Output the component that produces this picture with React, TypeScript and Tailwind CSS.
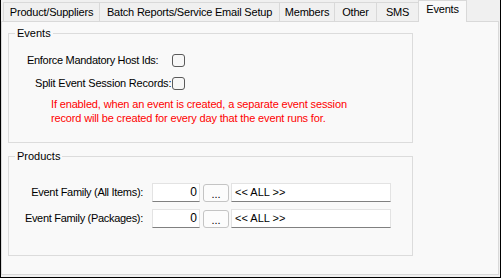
import React from 'react'

const tabs = [
    { name: 'Product/Suppliers', w: 'w-[97px]' },
    { name: 'Batch Reports/Service Email Setup', w: 'w-[181px]' },
    { name: 'Members', w: 'w-[56px]' },
    { name: 'Other', w: 'w-[43px]' },
    { name: 'SMS', w: 'w-[43px]' },
]

function Checkbox() {
    return <span className="block shrink-0 w-[13px] h-[13px] rounded-[3px] border border-[#5a5a5a] bg-[#f7f7f7]" />
}

function FamilyRow({ label }: { label: string }) {
    return (
        <div className="flex items-center h-[19px]">
            <div className="w-[135px] text-right pr-px whitespace-nowrap tracking-[-0.3px]">{label}</div>
            <div className="ml-[8px] w-[48px] h-[19px] bg-white border border-[#e3e3e3] border-b-[#808080] text-right pr-[2px] leading-[17px] text-[12px]">0</div>
            <div className="ml-[3px] w-[26px] h-[18px] rounded-[3px] border border-[#c4c4c4] bg-[#fcfcfc] text-center text-[11px] leading-[18px]">...</div>
            <div className="ml-[2px] w-[160px] h-[19px] bg-white border border-[#e3e3e3] border-b-[#808080] pl-[3px] leading-[17px]">&lt;&lt; ALL &gt;&gt;</div>
        </div>
    )
}

function GroupBox({ title, className, children }: { title: string; className: string; children: React.ReactNode }) {
    return (
        <div className={`relative border border-[#dcdcdc] ${className}`}>
            <span className="absolute -top-[8px] left-[6px] px-[2px] bg-[#f9f9f9] leading-[14px]">{title}</span>
            {children}
        </div>
    )
}

export default function App() {
    return (
        <div className="w-[501px] h-[278px] bg-[#f0f0f0] border-x border-b border-black flex flex-col text-[11px] text-black" style={{ fontFamily: '"Liberation Sans", Arial, sans-serif' }}>
            {/* Tab strip */}
            <div className="h-[21px] flex items-end pl-[2px] shrink-0 tracking-[-0.2px]">
                {tabs.map((t) => (
                    <div key={t.name} className={`${t.w} h-[19px] -ml-px first:ml-0 border border-b-0 border-[#d9d9d9] bg-[#f0f0f0] text-center leading-[18px] whitespace-nowrap`}>
                        {t.name}
                    </div>
                ))}
                <div className="w-[49px] h-[22px] -ml-px -mb-px relative z-10 border border-b-0 border-[#d9d9d9] bg-[#f9f9f9] text-center leading-[17px]">
                    Events
                </div>
            </div>

            {/* Panel */}
            <div className="flex-1 mr-px mb-[2px] bg-[#f9f9f9] border border-[#d9d9d9] pl-[6px] pt-[11px]">
                <GroupBox title="Events" className="w-[405px] h-[110px]">
                    <div className="pt-[19px] pl-[18px]">
                        <div className="flex items-center h-[14px]">
                            <div className="w-[145px] whitespace-nowrap tracking-[-0.3px]">Enforce Mandatory Host Ids:</div>
                            <Checkbox />
                        </div>
                        <div className="flex items-center h-[14px] mt-[9px] pl-[8px]">
                            <div className="w-[137px] whitespace-nowrap tracking-[-0.2px]">Split Event Session Records:</div>
                            <Checkbox />
                        </div>
                        <div className="mt-[7px] pl-[24px] text-[#ff0000] leading-[14px] whitespace-nowrap tracking-[-0.15px]">
                            <div>If enabled, when an event is created, a separate event session</div>
                            <div>record will be created for every day that the event runs for.</div>
                        </div>
                    </div>
                </GroupBox>

                <GroupBox title="Products" className="w-[405px] h-[100px] mt-[13px]">
                    <div className="pt-[26px] flex flex-col gap-[7px]">
                        <FamilyRow label="Event Family (All Items):" />
                        <FamilyRow label="Event Family (Packages):" />
                    </div>
                </GroupBox>
            </div>
        </div>
    )
}
